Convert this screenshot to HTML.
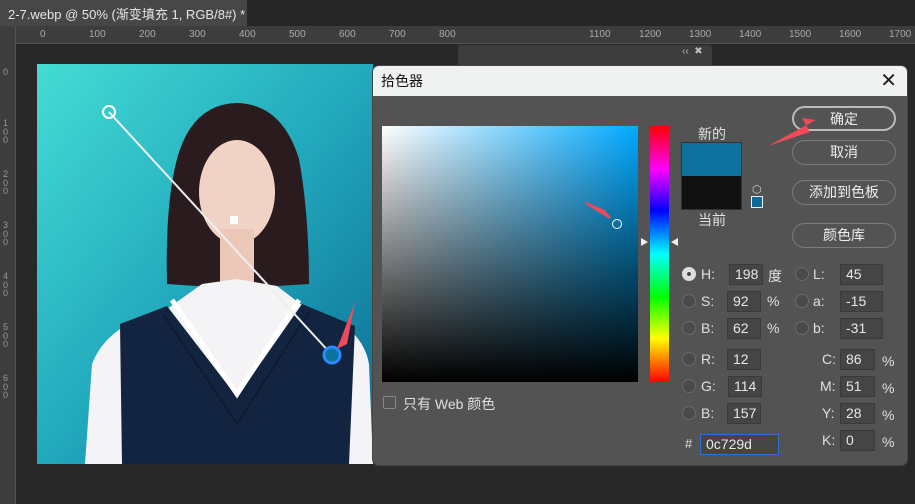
<!DOCTYPE html>
<html><head><meta charset="utf-8"><style>
*{margin:0;padding:0;box-sizing:border-box}
body{width:915px;height:504px;background:#282828;position:relative;overflow:hidden;font-family:"Liberation Sans","Noto Sans CJK SC",sans-serif;color:#ddd}
.a{position:absolute}
.fld{position:absolute;height:21px;background:#454545;border:1px solid #3a3a3a;font-size:14px;color:#e8e8e8;padding:1px 0 0 5px}
.lab{position:absolute;font-size:14px;color:#e0e0e0}
.rad{position:absolute;width:14px;height:14px;border-radius:50%;border:1px solid #6a6a6a;background:#4a4a4a}
.btn{position:absolute;left:792px;width:104px;height:25px;border:1px solid #7a7a7a;border-radius:13px;font-size:14px;color:#eee;text-align:center;line-height:23px}
.rt{position:absolute;top:29px;font-size:10px;color:#aaa}
</style></head><body>
<div class="a" style="left:0;top:0;width:915px;height:26px;background:#262626"></div>
<div class="a" style="left:0;top:0;width:247px;height:26px;background:#474747;font-size:13px;color:#e6e6e6;padding:4px 0 0 8px;white-space:nowrap;overflow:hidden">2-7.webp @ 50% (渐变填充 1, RGB/8#) * <span style="color:#aaa;margin-left:5px">×</span></div>
<div class="a" style="left:0;top:26px;width:915px;height:18px;background:#3d3d3d;border-bottom:1px solid #555"></div>
<div class="a" style="left:0;top:26px;width:16px;height:478px;background:#3d3d3d;border-right:1px solid #555"></div>
<div class="rt" style="left:40px">0</div><div class="rt" style="left:89px">100</div><div class="rt" style="left:139px">200</div><div class="rt" style="left:189px">300</div><div class="rt" style="left:239px">400</div><div class="rt" style="left:289px">500</div><div class="rt" style="left:339px">600</div><div class="rt" style="left:389px">700</div><div class="rt" style="left:439px">800</div><div class="rt" style="left:589px">1100</div><div class="rt" style="left:639px">1200</div><div class="rt" style="left:689px">1300</div><div class="rt" style="left:739px">1400</div><div class="rt" style="left:789px">1500</div><div class="rt" style="left:839px">1600</div><div class="rt" style="left:889px">1700</div>
<div class="a" style="left:3px;top:68px;font-size:9px;color:#999;line-height:8.5px;width:8px">0<br><br><br><br><br><br>1<br>0<br>0<br><br><br><br>2<br>0<br>0<br><br><br><br>3<br>0<br>0<br><br><br><br>4<br>0<br>0<br><br><br><br>5<br>0<br>0<br><br><br><br>6<br>0<br>0</div>
<!-- image -->
<svg class="a" style="left:37px;top:64px" width="336" height="400">
<defs><linearGradient id="bg" x1="0" y1="0" x2="1" y2="1"><stop offset="0" stop-color="#44dcd4"/><stop offset="0.5" stop-color="#22a9bd"/><stop offset="1" stop-color="#0b6a93"/></linearGradient></defs>
<rect width="336" height="400" fill="url(#bg)"/>
<path d="M130 220 Q128 140 140 95 Q155 40 200 39 Q245 40 262 95 Q272 150 272 220 L240 222 L160 222Z" fill="#2a1c1e"/>
<ellipse cx="200" cy="128" rx="38" ry="52" fill="#f1d3c6"/>
<rect x="183" y="165" width="34" height="55" fill="#ecc8b8"/>
<path d="M48 400 L55 300 Q70 260 130 245 L165 220 L200 215 L240 222 L270 245 Q325 260 332 300 L336 400Z" fill="#f4f4f6"/>
<path d="M85 400 L83 260 L130 242 L200 333 L265 240 L318 262 L312 400Z" fill="#132440"/>
<path d="M135 236 L200 330 L262 236" fill="none" stroke="#fff" stroke-width="5"/>
<path d="M126 250 L200 360 L272 248" fill="none" stroke="#0d1a30" stroke-width="2"/>
<line x1="72" y1="48" x2="295" y2="291" stroke="#eee" stroke-width="2"/>
<circle cx="72" cy="48" r="6" fill="none" stroke="#fff" stroke-width="2"/>
<circle cx="295" cy="291" r="8" fill="#0c729d" stroke="#2a8aff" stroke-width="3"/>
<rect x="193" y="152" width="8" height="8" fill="#fff"/>
<path d="M318 238 L300 285 L310 280 Z" fill="#f04a5a"/>
</svg>
<!-- panel behind -->
<div class="a" style="left:458px;top:45px;width:254px;height:22px;background:#3c3c3c;border-radius:3px"></div>
<div class="a" style="left:682px;top:46px;font-size:10px;color:#bbb">‹‹ &nbsp;✖</div>
<!-- dialog -->
<div class="a" style="left:372px;top:65px;width:536px;height:401px;background:#535353;border-radius:7px;overflow:hidden;border:1px solid #444">
<div style="height:30px;background:#f0f2f2;font-size:14px;color:#111;padding:5px 0 0 8px">拾色器<span style="position:absolute;right:10px;top:2px;font-size:20px;color:#222">✕</span></div>
</div>
<div class="a" style="left:382px;top:126px;width:256px;height:256px;background:linear-gradient(to bottom,rgba(0,0,0,0),#000),linear-gradient(to right,#fff,#00aaff)"></div>
<div class="a" style="left:612px;top:219px;width:10px;height:10px;border-radius:50%;border:1px solid #fff"></div>
<svg class="a" style="left:584px;top:200px" width="30" height="22"><path d="M2 3 L26 18 L20 11 Z M2 3 L20 11" fill="#f04a5a" stroke="#f04a5a" stroke-width="2"/></svg>
<div class="a" style="left:650px;top:126px;width:19px;height:256px;background:linear-gradient(to bottom,#f00,#f0f 17%,#00f 33%,#0ff 50%,#0f0 67%,#ff0 83%,#f00)"></div>
<div class="a" style="left:641px;top:238px;width:0;height:0;border-top:4px solid transparent;border-bottom:4px solid transparent;border-left:7px solid #eee"></div>
<div class="a" style="left:671px;top:238px;width:0;height:0;border-top:4px solid transparent;border-bottom:4px solid transparent;border-right:7px solid #eee"></div>
<div class="lab" style="left:698px;top:124px">新的</div>
<div class="a" style="left:681px;top:142px;width:61px;height:68px;border:1px solid #333;background:linear-gradient(#0e709c 50%,#111 50%)"></div>
<div class="lab" style="left:698px;top:210px">当前</div>
<div class="a" style="left:752px;top:183px;font-size:11px;color:#ccc">⬡</div>
<div class="a" style="left:751px;top:196px;width:12px;height:12px;background:#0c6a98;border:1px solid #eee"></div>
<div class="btn" style="top:106px;border-color:#bbb;border-width:2px">确定</div>
<svg class="a" style="left:766px;top:110px" width="60" height="40"><path d="M2 36 L50 10 L44 22 Z M50 10 L36 8 L44 22Z" fill="#f04a5a"/></svg>
<div class="btn" style="top:140px">取消</div>
<div class="btn" style="top:180px">添加到色板</div>
<div class="btn" style="top:223px">颜色库</div>
<!-- fields -->
<div class="rad" style="left:682px;top:267px;background:#eee;border:4px solid #ddd"><div style="width:4px;height:4px;margin:1px;background:#444;border-radius:50%"></div></div>
<div class="lab" style="left:701px;top:266px">H:</div><div class="fld" style="left:729px;top:264px;width:34px">198</div><div class="lab" style="left:768px;top:266px">度</div>
<div class="rad" style="left:682px;top:294px"></div><div class="lab" style="left:701px;top:293px">S:</div><div class="fld" style="left:727px;top:291px;width:34px">92</div><div class="lab" style="left:767px;top:293px">%</div>
<div class="rad" style="left:682px;top:321px"></div><div class="lab" style="left:701px;top:320px">B:</div><div class="fld" style="left:727px;top:318px;width:34px">62</div><div class="lab" style="left:767px;top:320px">%</div>
<div class="rad" style="left:795px;top:267px"></div><div class="lab" style="left:813px;top:266px">L:</div><div class="fld" style="left:840px;top:264px;width:43px">45</div>
<div class="rad" style="left:795px;top:294px"></div><div class="lab" style="left:813px;top:293px">a:</div><div class="fld" style="left:840px;top:291px;width:43px">-15</div>
<div class="rad" style="left:795px;top:321px"></div><div class="lab" style="left:813px;top:320px">b:</div><div class="fld" style="left:840px;top:318px;width:43px">-31</div>
<div class="rad" style="left:682px;top:352px"></div><div class="lab" style="left:701px;top:351px">R:</div><div class="fld" style="left:727px;top:349px;width:34px">12</div>
<div class="rad" style="left:682px;top:379px"></div><div class="lab" style="left:701px;top:378px">G:</div><div class="fld" style="left:728px;top:376px;width:34px">114</div>
<div class="rad" style="left:682px;top:406px"></div><div class="lab" style="left:701px;top:405px">B:</div><div class="fld" style="left:727px;top:403px;width:34px">157</div>
<div class="lab" style="left:685px;top:436px;font-size:13px">#</div><div class="fld" style="left:700px;top:434px;width:79px;border-color:#2f6fd0">0c729d</div>
<div class="lab" style="left:822px;top:351px">C:</div><div class="fld" style="left:840px;top:349px;width:35px">86</div><div class="lab" style="left:882px;top:353px">%</div>
<div class="lab" style="left:820px;top:378px">M:</div><div class="fld" style="left:840px;top:376px;width:35px">51</div><div class="lab" style="left:882px;top:380px">%</div>
<div class="lab" style="left:822px;top:405px">Y:</div><div class="fld" style="left:840px;top:403px;width:35px">28</div><div class="lab" style="left:882px;top:407px">%</div>
<div class="lab" style="left:822px;top:432px">K:</div><div class="fld" style="left:840px;top:430px;width:35px">0</div><div class="lab" style="left:882px;top:434px">%</div>
<div class="a" style="left:383px;top:396px;width:13px;height:13px;border:1px solid #888;border-radius:2px"></div>
<div class="lab" style="left:403px;top:394px">只有 Web 颜色</div>
</body></html>
